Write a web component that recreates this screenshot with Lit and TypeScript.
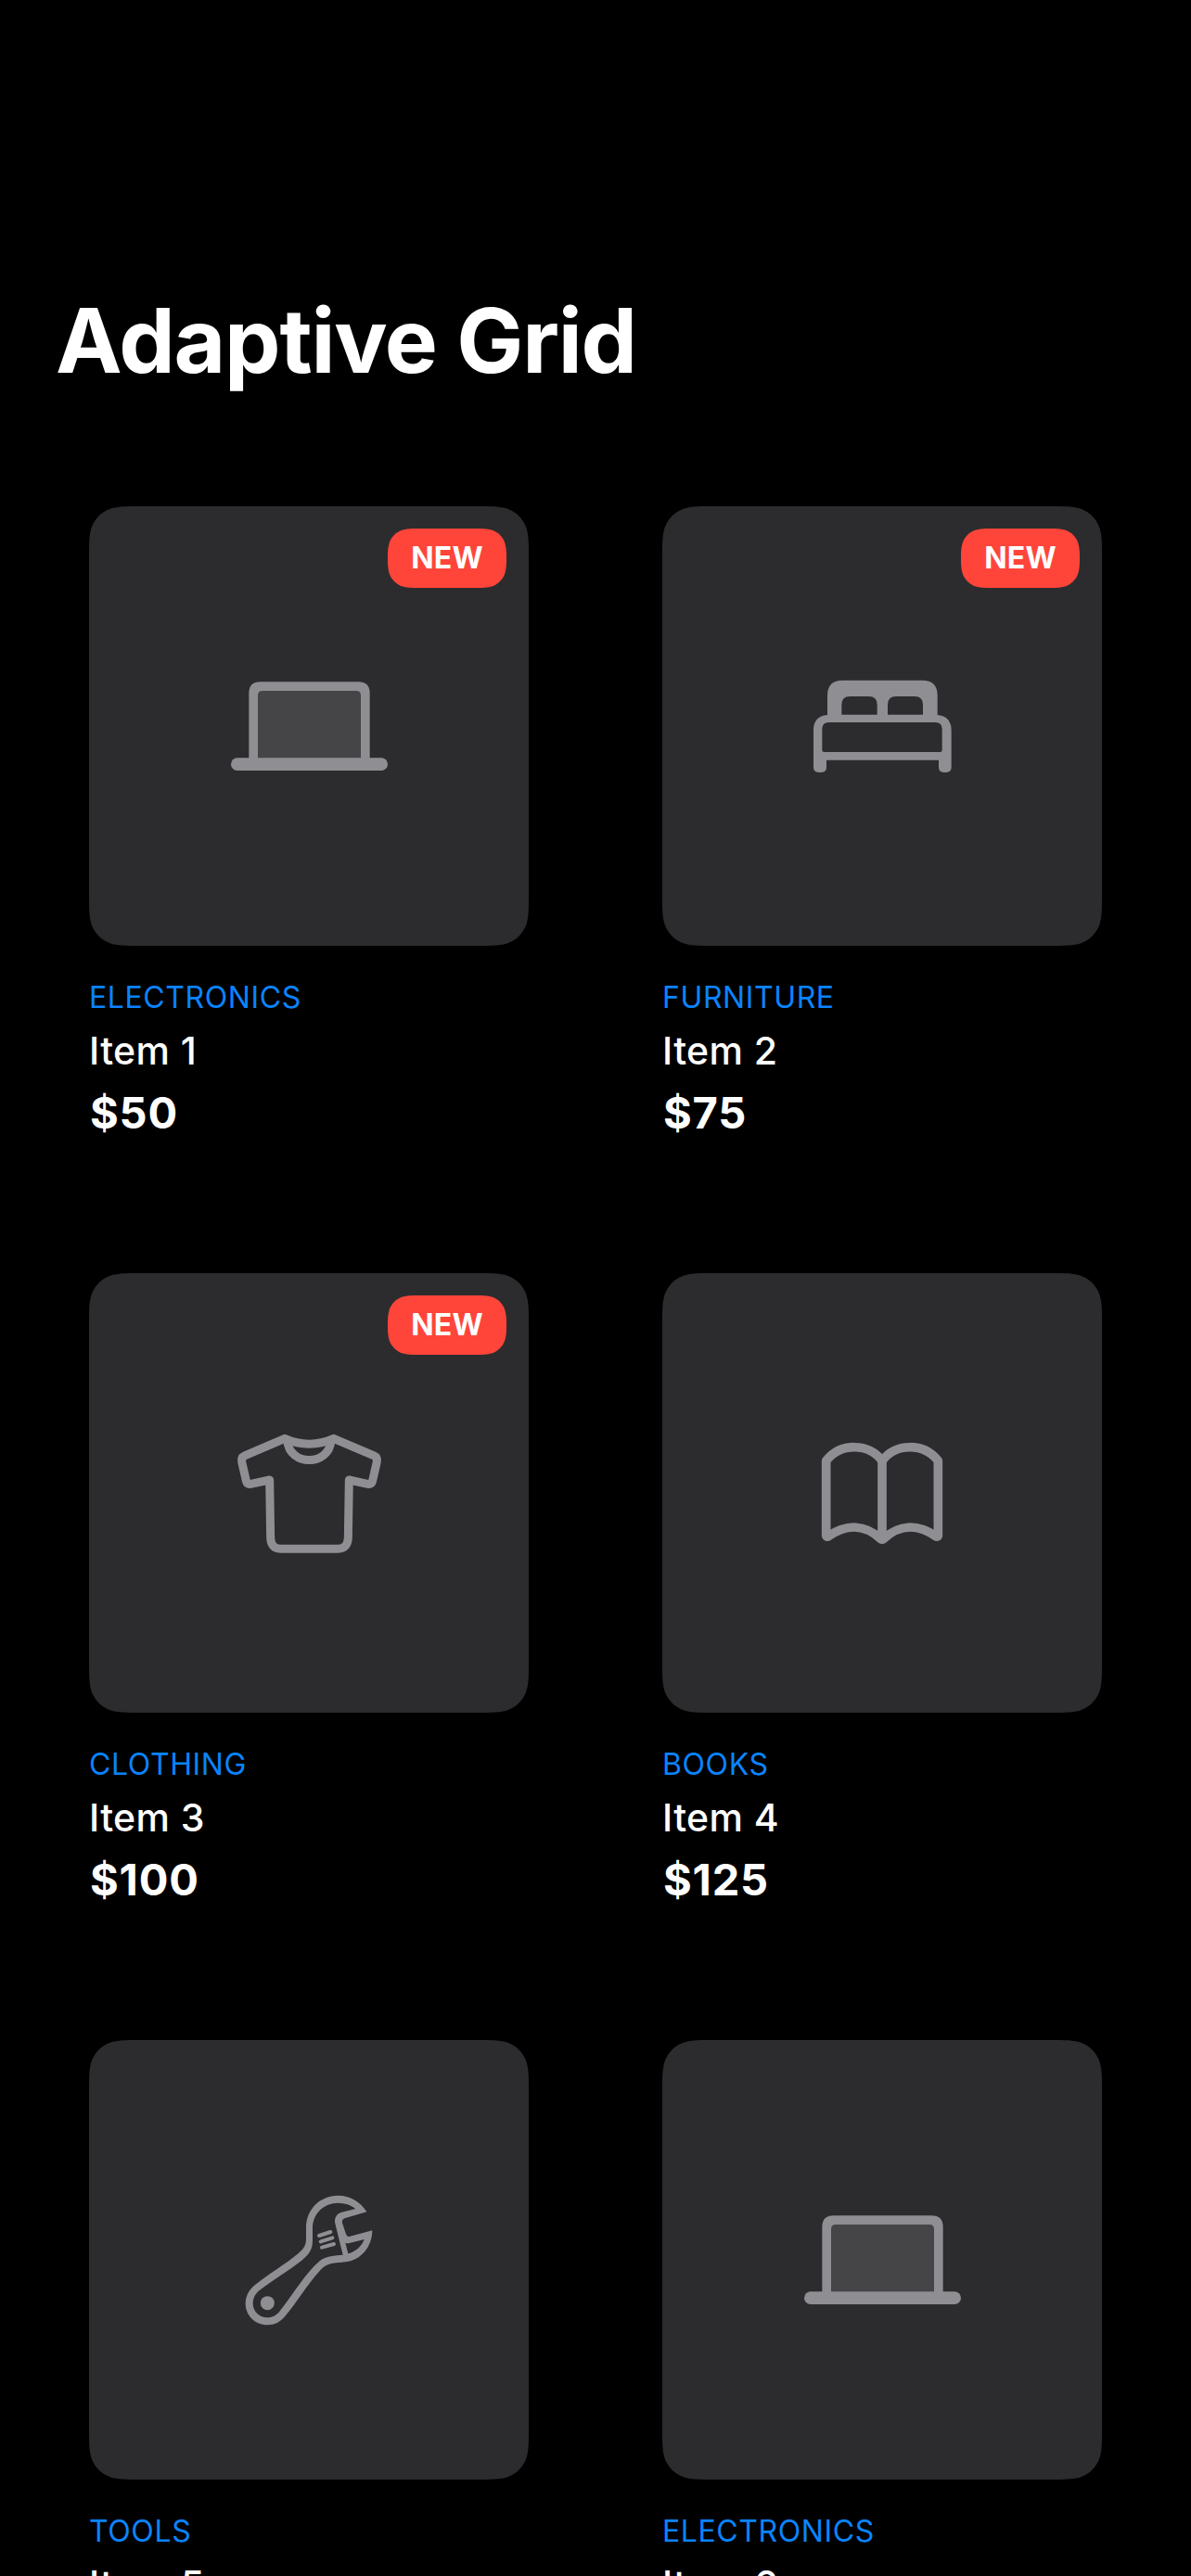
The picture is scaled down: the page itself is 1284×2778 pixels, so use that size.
import { LitElement, html, svg, css } from "lit";
import { customElement, property } from "lit/decorators.js";

type Category = "Electronics" | "Furniture" | "Clothing" | "Books" | "Tools";

interface Item {
  name: string;
  category: Category;
  price: number;
  isNew: boolean;
}

/** Rounded rectangle with continuous-curvature corners. */
function continuousRect(w: number, h: number, r: number): string {
  const m = Math.min(1.528665 * r, w / 2, h / 2);
  const a = Math.min(1.088493 * r, m);
  const b = 0.868407 * r;
  const c = 0.631494 * r;
  const d = 0.372824 * r;
  const e = 0.16906 * r;
  const f = 0.074911 * r;
  return [
    `M${m} 0H${w - m}`,
    `C${w - a} 0 ${w - b} 0 ${w - c} ${f}`,
    `C${w - d} ${e} ${w - e} ${d} ${w - f} ${c}`,
    `C${w} ${b} ${w} ${a} ${w} ${m}`,
    `V${h - m}`,
    `C${w} ${h - a} ${w} ${h - b} ${w - f} ${h - c}`,
    `C${w - e} ${h - d} ${w - d} ${h - e} ${w - c} ${h - f}`,
    `C${w - b} ${h} ${w - a} ${h} ${w - m} ${h}`,
    `H${m}`,
    `C${a} ${h} ${b} ${h} ${c} ${h - f}`,
    `C${d} ${h - e} ${e} ${h - d} ${f} ${h - c}`,
    `C0 ${h - b} 0 ${h - a} 0 ${h - m}`,
    `V${m}`,
    `C0 ${a} 0 ${b} ${f} ${c}`,
    `C${e} ${d} ${d} ${e} ${c} ${f}`,
    `C${b} 0 ${a} 0 ${m} 0Z`,
  ].join("");
}

const TILE_SHAPE = continuousRect(474, 474, 36);
const BADGE_SHAPE = continuousRect(128, 64, 24);

const ICONS = {
  Electronics: {
    box: "39 -51 540 540",
    art: svg`
      <path class="screen" d="M140 330V100H482V330Z"/>
      <path class="fill" fill-rule="evenodd" d="M115 324V113Q115 76 152 76H469Q506 76 506 113V324ZM144 324H477V120Q477 105 462 105H159Q144 105 144 120Z"/>
      <rect class="fill" x="57" y="322" width="507" height="41" rx="20.5"/>`,
  },
  Furniture: {
    box: "33 -51 540 540",
    art: svg`
      <path class="fill" fill-rule="evenodd" d="M126 183V120Q126 71 175 71H433Q482 71 482 120V183Q527 187 527 232V352Q527 369 510 369H503Q486 369 486 352V329H123V352Q123 369 106 369H98Q81 369 81 352V232Q81 187 126 183ZM172 182H287V150Q287 123 260 123H199Q172 123 172 150ZM321 182H435V150Q435 123 408 123H348Q321 123 321 150ZM109 297Q109 303 115 303H491Q497 303 497 297V229Q497 207 475 207H131Q109 207 109 229Z"/>`,
  },
  Clothing: {
    box: "9 -30 540 540",
    art: svg`
      <path class="line" stroke-width="27" d="M201 64L73 119Q59 125 62 139L76 200Q79 213 91 211L152 198L155 385Q156 421 190 421H370Q405 421 406 385L409 198L469 211Q482 213 485 200L499 139Q502 125 488 119L359 64Q280 99 201 64Z"/>
      <path class="line" stroke-width="27" d="M209 70C216 155 344 155 351 70"/>`,
  },
  Books: {
    box: "3 -30 540 540",
    art: svg`
      <path class="line" stroke-width="29" d="M273 136C230 79 140 76 92 136V378Q94 382 98 381C160 338 220 343 269 389Q273 392 277 389C326 343 386 338 448 381Q453 382 454 378V136C406 76 316 79 273 136ZM273 136V385"/>`,
  },
  Tools: {
    box: "9 -9 540 540",
    art: svg`
      <path class="fill" fill-rule="evenodd" d="M466 106C446 73 412 53 374 53C314 53 270 99 270 157V192C270 215 262 226 246 239C202 276 150 306 106 341C86 357 74 377 74 402C74 441 105 472 145 472C168 472 187 462 201 445C239 400 273 342 314 297C340 268 361 273 399 268C449 262 484 217 484 166L412 185Q402 188 399 178L387 142Q384 130 397 126ZM430 96L385 107C367 112 360 127 364 144L389 245C363 247 335 248 315 264C268 303 227 374 185 427C174 441 162 448 145 448C119 448 98 428 98 402C98 385 106 371 118 361C160 327 211 298 256 263C279 244 291 229 291 198V159C291 112 327 77 374 77C395 77 414 83 430 96ZM458 195C450 217 430 235 406 241L397 206Q402 209 410 207Z"/>
      <circle class="fill" cx="145" cy="401" r="22.500"/>
      <path class="line" stroke-width="12" d="M312 183L349 171M317 202L355 190M321 221L360 210"/>`,
  },
};

@customElement("item-card")
class ItemCard extends LitElement {
  @property({ attribute: false }) item!: Item;

  static styles = css`
    :host {
      display: flex;
      flex-direction: column;
      gap: 36px;
    }
    .tile {
      display: grid;
      place-items: center;
      position: relative;
      height: 474px;
    }
    .shape {
      position: absolute;
      inset: 0;
      width: 100%;
      height: 100%;
    }
    .tile-fill { fill: #2c2c2e; }
    .badge-fill { fill: #ff453a; }
    .icon {
      position: relative;
      width: 180px;
      height: 180px;
    }
    .fill { fill: #8e8e93; }
    .screen { fill: #454547; }
    .line {
      fill: none;
      stroke: #8e8e93;
      stroke-linecap: round;
      stroke-linejoin: round;
    }
    .badge {
      position: absolute;
      top: 24px;
      right: 24px;
      width: 128px;
      height: 64px;
      display: grid;
      place-items: center;
      color: #fff;
      font-size: 32px;
      font-weight: 700;
      letter-spacing: 0.2px;
    }
    .badge-label {
      position: relative;
      line-height: 40px;
    }
    .info {
      display: flex;
      flex-direction: column;
      gap: 12px;
      white-space: nowrap;
    }
    .category {
      color: #0a84ff;
      font-size: 32px;
      line-height: 39px;
      letter-spacing: 0.6px;
      text-transform: uppercase;
    }
    .name {
      font-size: 41px;
      line-height: 53px;
      font-weight: 500;
      letter-spacing: 0.4px;
    }
    .price {
      padding-left: 1px;
      font-size: 47px;
      line-height: 56px;
      font-weight: 700;
      letter-spacing: 0.8px;
    }
  `;

  render() {
    const { name, category, price, isNew } = this.item;
    const icon = ICONS[category];
    return html`
      <div class="tile">
        <svg class="shape" viewBox="0 0 474 474"><path class="tile-fill" d=${TILE_SHAPE} /></svg>
        <svg class="icon" viewBox=${icon.box}>${icon.art}</svg>
        ${isNew
          ? html`<div class="badge">
              <svg class="shape" viewBox="0 0 128 64"><path class="badge-fill" d=${BADGE_SHAPE} /></svg>
              <span class="badge-label">NEW</span>
            </div>`
          : null}
      </div>
      <div class="info">
        <div class="category">${category}</div>
        <div class="name">${name}</div>
        <div class="price">$${price}</div>
      </div>
    `;
  }
}

@customElement("app-root")
class AppRoot extends LitElement {
  private items: Item[] = [
    { name: "Item 1", category: "Electronics", price: 50, isNew: true },
    { name: "Item 2", category: "Furniture", price: 75, isNew: true },
    { name: "Item 3", category: "Clothing", price: 100, isNew: true },
    { name: "Item 4", category: "Books", price: 125, isNew: false },
    { name: "Item 5", category: "Tools", price: 150, isNew: false },
    { name: "Item 6", category: "Electronics", price: 175, isNew: false },
  ];

  static styles = css`
    :host {
      display: block;
      box-sizing: border-box;
      width: 1284px;
      height: 2778px;
      padding-top: 306px;
      overflow: hidden;
      background: #000;
      color: #fff;
      font-family: Inter, "Liberation Sans", sans-serif;
    }
    .title {
      margin: 0;
      padding: 0 60px;
      font-size: 96px;
      line-height: 123px;
      font-weight: 700;
      letter-spacing: -1.2px;
      white-space: nowrap;
    }
    .grid {
      display: grid;
      grid-template-columns: 474px 474px;
      column-gap: 144px;
      row-gap: 145px;
      padding: 117px 96px 0;
    }
  `;

  render() {
    return html`
      <h1 class="title">Adaptive Grid</h1>
      <main class="grid">
        ${this.items.map((item) => html`<item-card .item=${item}></item-card>`)}
      </main>
    `;
  }
}
